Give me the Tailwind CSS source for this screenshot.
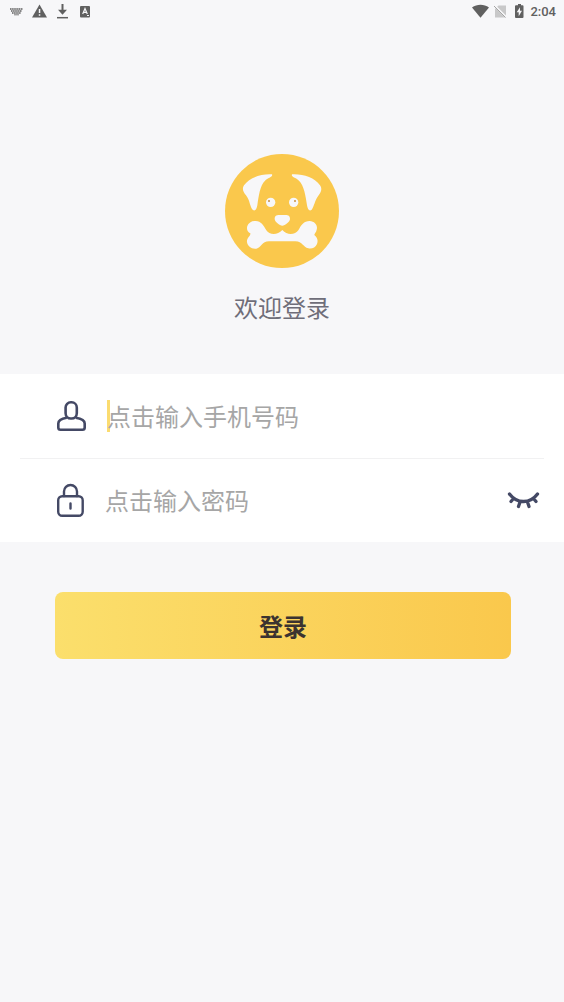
<!DOCTYPE html>
<html lang="zh-CN">
<head>
<meta charset="utf-8">
<meta name="viewport" content="width=device-width, initial-scale=1">
<title>欢迎登录</title>
<script src="https://cdn.jsdelivr.net/npm/@tailwindcss/browser@4"></script>
</head>
<body class="min-h-screen bg-[#f7f7f9] font-['Noto_Sans_CJK_SC',sans-serif]">
<header class="flex h-6 items-center justify-between px-2 text-[#606060]">
  <div class="flex items-center gap-2">
    <svg class="h-4 w-4" viewBox="0 0 16 16" fill="none" stroke="currentColor" aria-hidden="true">
      <path d="M2 5h13M3 7h11M4 9h9" stroke-dasharray="1.600 .5" stroke-width="1.300"/><path d="M6 10.800h5" stroke-width=".8"/>
    </svg>
    <svg class="h-4 w-4" viewBox="0 0 16 16" aria-hidden="true"><path fill="currentColor" d="M7.500 0.500 15 13.500H0Z"/><path fill="#f7f7f9" d="M6.800 5h1.500v4H6.800zM6.800 10.300h1.500v1.500H6.800z"/></svg>
    <svg class="h-4 w-4" viewBox="0 0 16 16" fill="none" stroke="currentColor" aria-hidden="true"><path d="M6.500 0v8" stroke-width="2"/><path d="M2 5.800h9l-4.500 5z" fill="currentColor" stroke="none"/><path d="M1 13.700h11" stroke-width="1.500"/></svg>
    <svg class="h-4 w-4" viewBox="0 0 16 16" aria-hidden="true"><rect y="2" width="10" height="11.500" rx="1" fill="currentColor"/><path d="m2.700 10 2.300-5.500L7.300 10M3.500 8.300h3" fill="none" stroke="#f7f7f9" stroke-width="1.200"/><path d="M7 11.500h2" stroke="#f7f7f9"/></svg>
  </div>
  <div class="flex items-center">
    <svg class="h-4 w-[18px]" viewBox="0 0 18 16" fill="currentColor" aria-hidden="true"><path d="M0 3.500C5-.3 12-.3 17 3.500L8.500 13.800Z"/></svg>
    <svg class="ml-[3px] h-4 w-4" viewBox="0 0 16 16" aria-hidden="true"><path fill="#c8c8c9" d="M5.500 1.500H13v12H2V5z"/><path stroke="#f7f7f9" stroke-width="2" d="m1.500 1.500 12 12"/><path stroke="#a5a5a5" d="m1 2 11.500 11.500"/></svg>
    <svg class="ml-[5px] h-4 w-3" viewBox="0 0 12 16" aria-hidden="true"><path fill="currentColor" d="M2.500 1.200H4V0h3v1.200h1.500q1 0 1 1V13q0 1-1 1H2q-1 0-1-1V2.200q0-1 1-1z"/><path fill="#f7f7f9" d="M6 3.200 2.700 8.200h2v4L8 6.700H6z"/></svg>
    <time class="ml-1 font-[Roboto,sans-serif] text-[13px] font-medium leading-6">2:04</time>
  </div>
</header>

<main class="flex flex-col pt-[130px]">
  <svg class="size-[114px] self-center" viewBox="15 14 342 342" role="img" aria-label="小狗衔骨头标志">
    <circle cx="186" cy="185" r="171" fill="#fac84c"/>
    <g fill="#f7f7f9">
      <path d="M156 75C125 73 88 84 72 108C65 118 70 128 78 138C90 153 90 174 98 181C105 187 110 180 112 168C116 140 120 108 135 94C143 86 160 83 156 75Z"/>
      <path d="M216 75C247 73 284 84 300 108C307 118 304 128 296 138C284 153 282 174 275 181C268 187 263 180 261 168C257 140 252 108 237 94C229 86 212 83 216 75Z"/>
      <circle cx="152" cy="159" r="14"/><circle cx="221" cy="159" r="14"/>
      <path d="M164 209C164 196 174 197 187 197S210 196 210 209C210 217 195 229 187 229S164 217 164 209Z"/>
      <path d="M104 215C122 213 130 227 139 243C147 256 171 260 187 242C202 260 226 256 235 243C244 227 251 215 269 215C285 216 294 229 290 241C289 248 283 253 283 257C294 265 294 276 291 284C286 296 275 299 265 297C249 294 248 276 226 276H147C125 276 125 295 109 298C94 300 83 290 81 279C79 266 93 260 91 252C83 248 79 240 82 230C85 221 94 215 104 215Z"/>
    </g>
    <g fill="#c98f3c"><circle cx="147" cy="155" r="3"/><circle cx="225" cy="155" r="3"/></g>
  </svg>
  <h1 class="mt-[19px] text-center text-2xl leading-10 text-[#6f6e79]">欢迎登录</h1>

  <form>
    <div class="mt-[47px] bg-white">
      <div class="flex h-[84px] items-center pl-[55px] pr-5">
        <label for="phone" class="shrink-0">
          <svg class="size-8" viewBox="0 0 32 32" fill="none" stroke="#444965" stroke-width="2.600" stroke-linejoin="round" role="img" aria-label="手机号码"><rect x="10.600" y="2.300" width="11.200" height="16.200" rx="5.200"/><path d="M11.800 17.800C7 18.500 3.300 20.500 3.300 23.500V27.500q0 2.200 2.200 2.200h22q2.200 0 2.200-2.200V23.500c0-3-4-5-9-5.700"/></svg>
        </label>
        <span class="ml-5 h-8 w-[3px] shrink-0 bg-[#fbdc70]"></span>
        <input id="phone" type="tel" placeholder="点击输入手机号码" class="-ml-[3px] h-10 min-w-0 flex-1 bg-transparent pb-[2px] text-2xl text-[#444965] outline-none placeholder:text-[#a6a6a6]">
      </div>
      <div class="mx-5 h-px bg-[#f1f1f2]"></div>
      <div class="flex h-[83px] items-center pl-[55px] pr-6">
        <label for="password" class="shrink-0">
          <svg class="h-9 w-8" viewBox="0 0 32 36" fill="none" stroke="#444965" stroke-width="2.400" stroke-linecap="round" role="img" aria-label="密码"><rect x="3.200" y="13.200" width="24.500" height="19.500" rx="4"/><path d="M9 13V8.500a6.500 6.500 0 0 1 13 0v4.500M15.500 20.500v5"/></svg>
        </label>
        <input id="password" type="password" placeholder="点击输入密码" class="ml-[18px] h-10 min-w-0 flex-1 bg-transparent pb-[2px] text-2xl text-[#444965] outline-none placeholder:text-[#a6a6a6]">
        <button type="button" aria-label="显示密码" class="shrink-0">
          <svg class="h-6 w-[34px]" viewBox="0 0 34 24" fill="none" stroke="#444965" stroke-width="3.300" stroke-linecap="round" aria-hidden="true"><path d="M3.500 5C11 15 24 15 31.500 5M7.500 9.500l-2.500 3M14 13l-1.500 4.500M21.500 13l1.500 4.500M27.500 9.500l2.500 3"/></svg>
        </button>
      </div>
    </div>
    <div class="pl-[55px] pr-[53px] pt-[50px]">
      <button type="submit" class="h-[67px] w-full rounded-lg bg-linear-to-r from-[#fbdf6c] to-[#fac84c] text-2xl font-bold text-[#3b3330]">登录</button>
    </div>
  </form>
</main>
</body>
</html>
